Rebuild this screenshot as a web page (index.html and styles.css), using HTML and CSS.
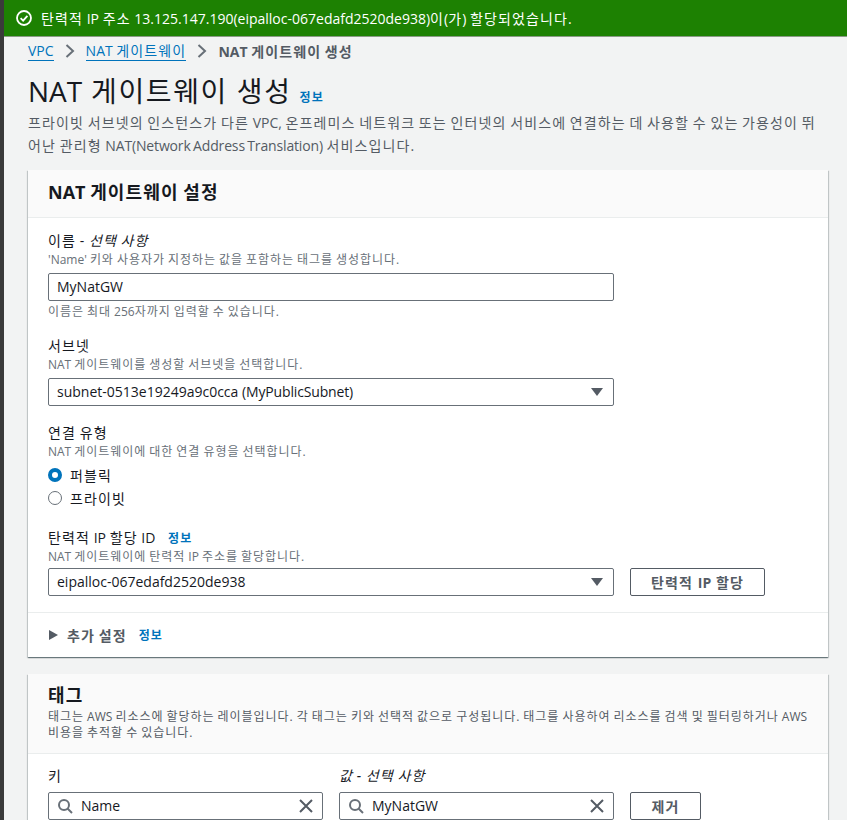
FILE: index.html
```html
<!DOCTYPE html>
<html lang="ko">
<head>
<meta charset="utf-8">
<title>NAT 게이트웨이 생성</title>
<link rel="stylesheet" href="styles.css">
</head>
<body>
<div class="flash">
  <svg class="flash-icon" viewBox="0 0 16 16" width="16" height="16"><circle cx="8" cy="8" r="7" fill="none" stroke="#fff" stroke-width="1.8"/><path d="M4.6 8.2 7.1 10.6 11.4 5.8" fill="none" stroke="#fff" stroke-width="1.8"/></svg>
  <span>탄력적 <span class="lat">IP</span> 주소 <span class="lat">13.125.147.190(eipalloc-067edafd2520de938)</span>이<span class="lat">(</span>가<span class="lat">)</span> 할당되었습니다.</span>
</div>
<main class="content">
  <nav class="crumbs">
    <a class="link-u"><span class="lat">VPC</span></a>
    <svg class="chev" viewBox="0 0 12 16" width="12" height="16"><path d="M2.5 2 9 8 2.5 14" fill="none" stroke="#687078" stroke-width="2"/></svg>
    <a class="link-u"><span class="lat">NAT</span> 게이트웨이</a>
    <svg class="chev" viewBox="0 0 12 16" width="12" height="16"><path d="M2.5 2 9 8 2.5 14" fill="none" stroke="#687078" stroke-width="2"/></svg>
    <span class="crumb-cur"><span class="lat">NAT</span> 게이트웨이 생성</span>
  </nav>
  <div class="title-row"><h1><span class="lat">NAT</span> 게이트웨이 생성</h1><a class="info">정보</a></div>
  <p class="desc">프라이빗 서브넷의 인스턴스가 다른 <span class="lat">VPC,</span> 온프레미스 네트워크 또는 인터넷의 서비스에 연결하는 데 사용할 수 있는 가용성이 뛰어난 관리형 <span class="tight">NAT(Network Address Translation)</span> 서비스입니다.</p>

  <section class="card">
    <header class="card-head"><h2><span class="lat">NAT</span> 게이트웨이 설정</h2></header>
    <div class="card-body">
      <div class="field f-name">
        <div class="label">이름 - <i>선택 사항</i></div>
        <div class="hint"><span class="lat">'Name'</span> 키와 사용자가 지정하는 값을 포함하는 태그를 생성합니다.</div>
        <div class="input w566">MyNatGW</div>
        <div class="hint under">이름은 최대 <span class="lat">256</span>자까지 입력할 수 있습니다.</div>
      </div>
      <div class="field f-subnet">
        <div class="label">서브넷</div>
        <div class="hint"><span class="lat">NAT</span> 게이트웨이를 생성할 서브넷을 선택합니다.</div>
        <div class="input w566 select"><span>subnet-0513e19249a9c0cca <span class="tight">(MyPublicSubnet)</span></span><span class="caret"></span></div>
      </div>
      <div class="field f-type">
        <div class="label">연결 유형</div>
        <div class="hint"><span class="lat">NAT</span> 게이트웨이에 대한 연결 유형을 선택합니다.</div>
        <div class="radio"><span class="dot on"></span>퍼블릭</div>
        <div class="radio"><span class="dot"></span>프라이빗</div>
      </div>
      <div class="field f-eip">
        <div class="label">탄력적 <span class="lat">IP</span> 할당 <span class="lat">ID</span> <a class="info sm">정보</a></div>
        <div class="hint"><span class="lat">NAT</span> 게이트웨이에 탄력적 <span class="lat">IP</span> 주소를 할당합니다.</div>
        <div class="eip-row">
          <div class="input w566 select">eipalloc-067edafd2520de938<span class="caret"></span></div>
          <button class="btn btn-eip">탄력적 <span class="lat">IP</span> 할당</button>
        </div>
      </div>
    </div>
    <div class="expander">
      <span class="tri"></span><span class="exp-label">추가 설정</span><a class="info sm">정보</a>
    </div>
  </section>

  <section class="card tags">
    <header class="tag-head">
      <h2>태그</h2>
      <p>태그는 <span class="lat">AWS</span> 리소스에 할당하는 레이블입니다. 각 태그는 키와 선택적 값으로 구성됩니다. 태그를 사용하여 리소스를 검색 및 필터링하거나 <span class="lat">AWS</span> 비용을 추적할 수 있습니다.</p>
    </header>
    <div class="tag-body">
      <div class="tag-col">
        <div class="label">키</div>
        <div class="input search">
          <svg viewBox="0 0 16 16" width="16" height="16"><circle cx="7" cy="7" r="5" fill="none" stroke="#687078" stroke-width="2"/><path d="M10.5 10.5 15 15" stroke="#687078" stroke-width="2"/></svg>
          <span class="grow">Name</span>
          <svg viewBox="0 0 16 16" width="16" height="16"><path d="M2 2 14 14M14 2 2 14" stroke="#545b64" stroke-width="2"/></svg>
        </div>
      </div>
      <div class="tag-col">
        <div class="label"><i>값 - 선택 사항</i></div>
        <div class="input search">
          <svg viewBox="0 0 16 16" width="16" height="16"><circle cx="7" cy="7" r="5" fill="none" stroke="#687078" stroke-width="2"/><path d="M10.5 10.5 15 15" stroke="#687078" stroke-width="2"/></svg>
          <span class="grow">MyNatGW</span>
          <svg viewBox="0 0 16 16" width="16" height="16"><path d="M2 2 14 14M14 2 2 14" stroke="#545b64" stroke-width="2"/></svg>
        </div>
      </div>
      <button class="btn btn-rm">제거</button>
    </div>
  </section>
</main>
</body>
</html>
```
FILE: styles.css
```css
* { box-sizing: border-box; }
html, body { margin: 0; height: 820px; overflow: hidden; }
body {
  background: #f2f3f3;
  color: #16191f;
  font-family: "Open Sans", "Noto Sans CJK KR", sans-serif;
  font-size: 14px;
  letter-spacing: .08em;
  word-spacing: -1.1px;
  border-left: 4px solid #3a3a3a;
}
.lat { letter-spacing: 0; }
.tight { letter-spacing: -.15px; }
.flash {
  height: 37px;
  background: #1d8102;
  border-bottom: 1px solid #8a9a86;
  color: #fff;
  display: flex;
  align-items: center;
  gap: 9px;
  padding-left: 12px;
  font-size: 14px;
}
.flash-icon { flex: none; }
.content { padding: 0 19px 0 24px; }
.crumbs { display: flex; align-items: center; height: 29px; padding-bottom: 2px; }
.link-u { color: #0073bb; border-bottom: 1px solid #0073bb; line-height: 19px; }
.chev { margin: 0 10px 0 10px; }
.crumb-cur { color: #545b64; font-weight: 700; }
.title-row { display: flex; align-items: flex-end; margin-top: 6px; height: 38px; }
h1 { margin: 0; font-size: 28px; line-height: 38px; font-weight: 400; letter-spacing: 1.6px; word-spacing: 0; }
.info { color: #0073bb; font-size: 12px; font-weight: 700; }
.title-row .info { margin: 0 0 4px 8px; line-height: 16px; }
.desc { margin: 1px 0 0; color: #545b64; line-height: 23px; width: 790px; }
.card {
  background: #fff;
  margin-top: 13px;
  width: 800px;
  box-shadow: 0 1px 1px 0 rgba(0,28,36,.4), 1px 1px 1px 0 rgba(0,28,36,.15), -1px 1px 1px 0 rgba(0,28,36,.15);
}
.card-head {
  height: 48px;
  background: #fafafa;
  border-bottom: 1px solid #eaeded;
  padding: 0 20px 4px;
  display: flex;
  align-items: center;
}
h2 { margin: 0; font-size: 18px; line-height: 24px; font-weight: 700; }
.card-body { padding: 12px 20px 0; height: 394px; }
.field { display: flex; flex-direction: column; align-items: flex-start; }
.label { line-height: 21px; margin-bottom: 1px; }
.hint { font-size: 12px; line-height: 16px; color: #687078; letter-spacing: .95px; word-spacing: -1px; }
.hint.under { margin-top: 3px; }
.input {
  height: 28px;
  border: 1px solid #687078;
  border-radius: 2px;
  background: #fff;
  padding: 0 8px;
  line-height: 26px;
  display: flex;
  align-items: center;
  letter-spacing: 0;
  word-spacing: 0;
  white-space: pre;
}
.w566 { width: 566px; }
.f-name .input { margin-top: 5px; }
.f-subnet { margin-top: 15px; }
.f-subnet .input { margin-top: 5px; }
.f-type { margin-top: 16px; }
.select { position: relative; }
.caret {
  position: absolute;
  right: 10px;
  top: 9px;
  border-left: 6px solid transparent;
  border-right: 6px solid transparent;
  border-top: 8px solid #545b64;
}
.radio { display: flex; align-items: center; height: 23px; gap: 8px; }
.f-type .hint + .radio { margin-top: 3px; }
.dot {
  width: 14px; height: 14px; border-radius: 50%;
  border: 1.5px solid #687078; background: #fff; flex: none;
}
.dot.on { border: 4px solid #0073bb; }
.f-eip { margin-top: 18px; }
.f-eip .label { margin-bottom: 0; }
.eip-row { display: flex; gap: 16px; margin-top: 3px; }
.info.sm { margin-left: 9px; }
.btn {
  font: 700 14px "Open Sans", "Noto Sans CJK KR", sans-serif;
  letter-spacing: .08em;
  color: #545b64;
  background: #fff;
  border: 1px solid #545b64;
  border-radius: 2px;
  height: 28px;
  padding: 0;
}
.btn-eip { width: 135px; }
.btn-rm { width: 71px; margin-top: 27px; }
.expander {
  height: 45px;
  border-top: 1px solid #eaeded;
  padding-left: 21px;
  display: flex;
  align-items: center;
}
.expander .info { margin-left: 12px; }
.tri {
  border-top: 5px solid transparent;
  border-bottom: 5px solid transparent;
  border-left: 9px solid #545b64;
  margin-right: 9px;
}
.exp-label { color: #545b64; font-weight: 700; }
.tags { margin-top: 17px; height: 200px; }
.tag-head {
  background: #fafafa;
  border-bottom: 1px solid #eaeded;
  padding: 9px 20px 11px;
  height: 80px;
}
.tag-head h2 { margin-bottom: 2px; }
.tag-head p { margin: 0; font-size: 12px; line-height: 16px; color: #545b64; letter-spacing: .96px; word-spacing: -1px; }
.tag-body { display: flex; gap: 16px; padding: 11px 20px 0; align-items: flex-start; }
.tag-col { width: 275px; display: flex; flex-direction: column; gap: 5px; }
.search { gap: 8px; padding: 0 8px; }
.grow { flex: 1; }
i { font-style: italic; }
```
